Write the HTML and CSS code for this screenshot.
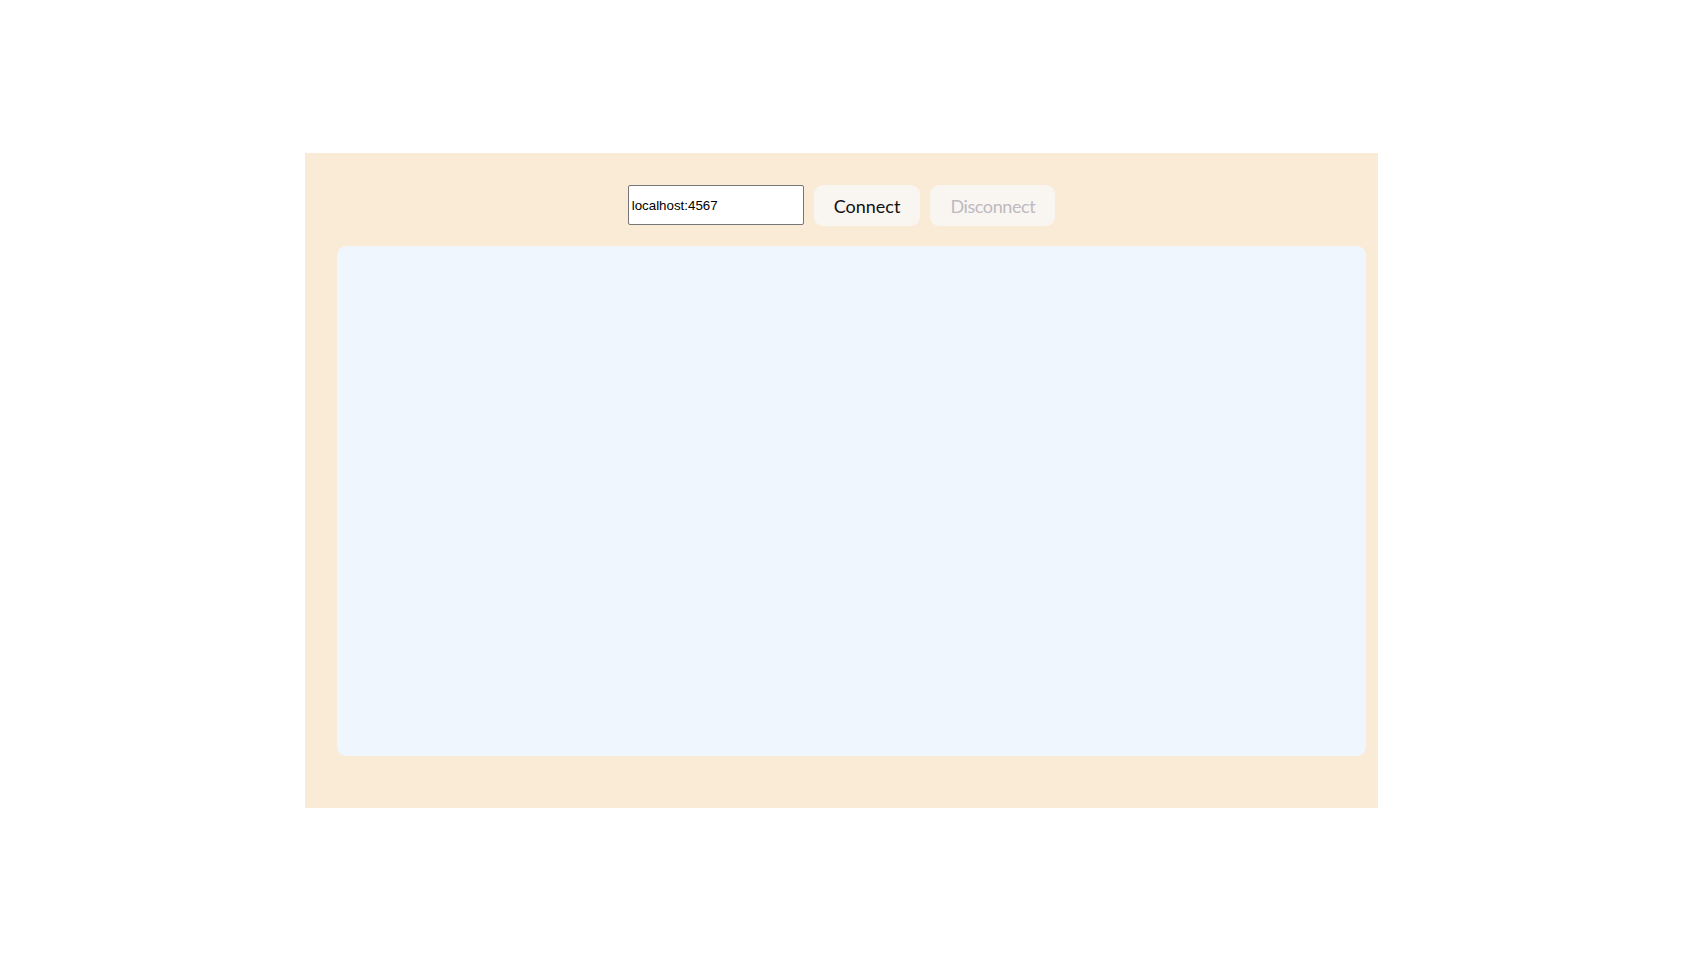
FILE: index.html
```html
<!DOCTYPE html>
<html lang="en">
<head>
<meta charset="utf-8">
<title>Client</title>
<link rel="stylesheet" href="styles.css">
</head>
<body>
<main class="app">
  <div class="toolbar">
    <input class="address" type="text" value="localhost:4567">
    <button class="btn">Connect</button>
    <button class="btn" disabled>Disconnect</button>
  </div>
  <section class="log"></section>
</main>
</body>
</html>
```

FILE: styles.css
```css
html, body {
  margin: 0;
  padding: 0;
  background: #ffffff;
}
body {
  height: 100vh;
  display: flex;
  align-items: center;
  justify-content: center;
  font-family: Lato, "Liberation Sans", sans-serif;
}
.app {
  box-sizing: border-box;
  width: 1073px;
  height: 655px;
  background: #faebd7;
  padding: 32px 0 52px;
  display: flex;
  flex-direction: column;
}
.toolbar {
  display: flex;
  justify-content: center;
  gap: 10px;
  height: 41px;
}
.address {
  box-sizing: border-box;
  width: 176px;
  height: 40px;
  margin: 0;
  padding: 1px 3px;
  border: 1px solid #767676;
  border-radius: 2px;
  background: #ffffff;
  font-family: "Liberation Sans", Arial, sans-serif;
  font-size: 13.33px;
  color: #000000;
}
.btn {
  box-sizing: border-box;
  height: 41px;
  margin: 0;
  padding: 0 20px;
  border: none;
  border-radius: 9px;
  background: #f9f5f0;
  font-family: Lato, "Liberation Sans", sans-serif;
  font-size: 18px;
  color: #101010;
}
.btn:disabled {
  color: #bdbac2;
  letter-spacing: -0.4px;
}
.log {
  flex: 1;
  margin: 20px 12px 0 32px;
  background: #eff6fd;
  border-radius: 9px;
}
```
